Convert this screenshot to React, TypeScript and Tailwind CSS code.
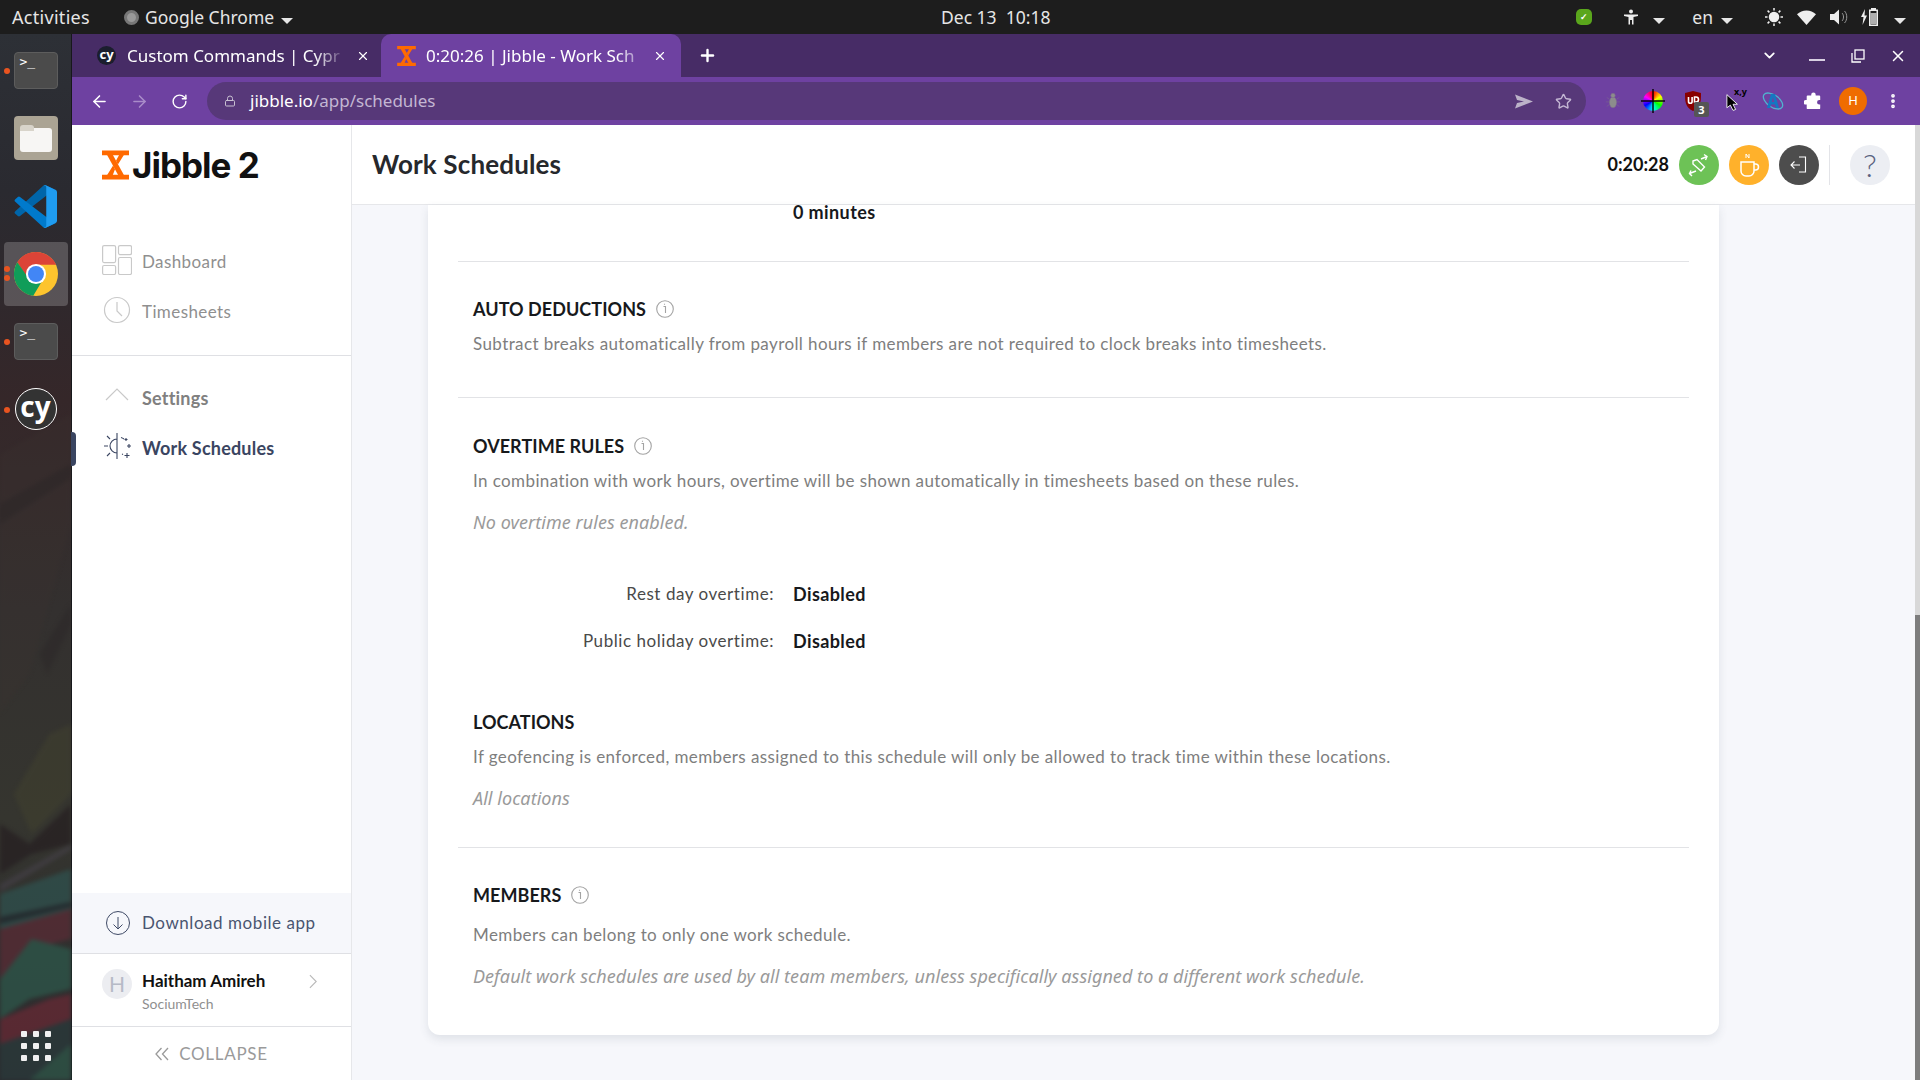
import { ArrowLeft, ArrowRight, RotateCw, Lock, Star, MoreVertical, X, Plus, ChevronDown } from "lucide-react";
import type { ReactNode } from "react";

const body = "font-['Lato',sans-serif]";
const chromeFont = "font-['Noto_Sans',sans-serif]";

function Caret() {
  return <span className="inline-block w-0 h-0 border-l-[6px] border-r-[6px] border-t-[6px] border-l-transparent border-r-transparent border-t-[#e6e6e6]" />;
}

// orange hourglass, used in the tab and the sidebar
function JibbleMark({ className }: { className: string }) {
  return (
    <svg viewBox="0 0 28 30" className={className} fill="#ff6a00">
      <path d="M0 0h28v5H0zM0 25h28v5H0z" />
      <path d="M5 4h6l12 22h-6z" />
      <path d="M18 4h5l-6.500 10.500-2-4zM11.500 15.500l2 4L11 26H5z" />
    </svg>
  );
}

function TermIcon() {
  return (
    <div className="w-11 h-[37px] rounded-[4px] bg-[#4b4b4b] border border-[#5d5d5d] pl-[5px] text-white text-[13px] leading-[17px] font-['DejaVu_Sans_Mono',monospace]">
      &gt;_
    </div>
  );
}

function Dot({ className = "top-1/2 -translate-y-1/2" }: { className?: string }) {
  return <span className={`absolute left-[4px] w-[6px] h-[6px] rounded-full bg-[#e95420] ${className}`} />;
}

// blurred streaks of the desktop wallpaper behind the dock
function Wallpaper() {
  return (
    <svg viewBox="0 0 72 1046" preserveAspectRatio="none" className="absolute inset-0 w-full h-full blur-[2px] opacity-70">
      <path fill="#3c3230" d="M0 420 72 380v110L30 640 0 680z" opacity=".4" />
      <path fill="#2a2526" d="M0 470 72 430v14L0 490zM40 620l32-50v20l-24 50z" opacity=".6" />
      <path fill="#44452f" d="M14 760 50 700l22-10v70l-40 40z" opacity=".6" />
      <path fill="#241c1f" d="M0 790 30 810 72 770v40l-40 10-32 20z" opacity=".9" />
      <path fill="#4a4550" d="M0 850 72 810v6L0 858z" opacity=".7" />
      <path fill="#2f5350" d="M0 860 72 835v45L0 895z" />
      <path fill="#1f2a30" d="M0 883 72 868v5L0 890z" />
      <path fill="#5c2b36" d="M0 895 72 875v30L30 915 0 945z" />
      <path fill="#2d5a4c" d="M0 945 32 905l40 10v40L30 965 0 985z" />
      <path fill="#6b2935" d="M0 985 50 965l22-5v25L30 1005 0 1010z" />
      <path fill="#2a3b3c" d="M0 1010 72 985v61H0z" />
      <path fill="#2f5a4a" d="M30 1046 72 1010v36z" />
    </svg>
  );
}

function Dock() {
  return (
    <aside className="w-[72px] shrink-0 relative bg-[linear-gradient(180deg,#2d3036_0%,#2a2a30_15%,#352729_35%,#33302f_55%,#35352f_75%,#2a2a2e_100%)] border-r border-[#17181b] flex flex-col items-center pt-[18px]">
      <Wallpaper />
      <div className="relative w-full h-[37px] flex justify-center"><Dot /><TermIcon /></div>
      <div className="relative w-11 h-11 mt-[27px] rounded-[4px] bg-[#aba494] flex items-center justify-center">
        <div className="relative w-8 h-[24px] mt-[3px] rounded-[3px] bg-[#f7f6f4]">
          <span className="absolute -top-[3px] left-0 w-[14px] h-[6px] rounded-t-[3px] bg-[#d8d4ca]" />
        </div>
      </div>
      <div className="relative mt-[25px] h-[42px]">
        <svg viewBox="0 0 100 100" className="w-[43px] h-[43px]">
          <path fill="#0065a9" d="M96 11 75 1a6 6 0 0 0-7 1L3 61a4 4 0 0 0 0 6l6 5a4 4 0 0 0 5 0L96 9z" />
          <path fill="#007acc" d="M96 89 75 99a6 6 0 0 1-7-1L3 39a4 4 0 0 1 0-6l6-5a4 4 0 0 1 5 0l82 62z" />
          <path fill="#1f9cf0" d="M75 99a6 6 0 0 1-7-1c2 2 7 1 7-3V5c0-4-5-5-7-3a6 6 0 0 1 7-1l21 10a6 6 0 0 1 4 6v66a6 6 0 0 1-4 6z" />
        </svg>
      </div>
      <div className="relative mt-[15px] w-[64px] h-[64px] rounded-[4px] bg-white/20 flex items-center justify-center">
        <span className="absolute left-0 top-[24px] w-[6px] h-[6px] rounded-full bg-[#e95420]" />
        <span className="absolute left-0 top-[33px] w-[6px] h-[6px] rounded-full bg-[#e95420]" />
        <svg viewBox="0 0 48 48" className="w-11 h-11">
          <circle cx="24" cy="24" r="24" fill="#fdc42e" />
          <path fill="#dc4437" d="M24 0A24 24 0 0 0 3.600 11.300L14 28 24 14h22A24 24 0 0 0 24 0z" />
          <path fill="#109d59" d="M3.600 11.300A24 24 0 0 0 21 47.800L31 31 16 29z" />
          <circle cx="24" cy="24" r="11" fill="#fff" />
          <circle cx="24" cy="24" r="8.700" fill="#4286f5" />
        </svg>
      </div>
      <div className="relative w-full h-[37px] mt-[17px] flex justify-center"><Dot /><TermIcon /></div>
      <div className="relative w-full h-[43px] mt-[28px] flex justify-center">
        <Dot />
        <div className="w-[42px] h-[42px] rounded-full bg-[#333] border border-white flex items-center justify-center text-white text-[28px] font-bold leading-none pb-[6px] font-['Open_Sans',sans-serif]">cy</div>
      </div>
      <div className="absolute bottom-[19px] left-[21px] grid grid-cols-3 gap-x-[6px] gap-y-[6px]">
        {Array.from({ length: 9 }).map((_, i) => (
          <span key={i} className="w-[6px] h-[6px] rounded-[1px] bg-[#f0f0f0]" />
        ))}
      </div>
    </aside>
  );
}

function TopBar() {
  return (
    <header className={`h-[34px] bg-[#1d1d1d] flex items-center text-[#e6e6e6] text-[17.500px] relative ${chromeFont}`}>
      <span className="ml-[12px] text-[18px] tracking-[0.3px]">Activities</span>
      <span className="ml-[34px] w-[15px] h-[15px] rounded-full bg-[#999] border-[3px] border-[#777]" />
      <span className="ml-[6px]">Google Chrome</span>
      <span className="ml-[7px]"><Caret /></span>
      <span className="absolute left-[941px]">Dec 13&nbsp;&nbsp;10:18</span>
      <div className="ml-auto flex items-center">
        <span className="w-[16px] h-[16px] rounded-[5px] bg-[#5aa61c] flex items-center justify-center text-white text-[9px] font-bold">✓</span>
        <svg viewBox="0 0 16 16" className="w-4 h-4 ml-[31px]" fill="#eee">
          <circle cx="8" cy="2.500" r="2" />
          <path d="M1 5.500h14v1.500l-4.500 1v7.500H9V11H7v4.500H5.500V8L1 7z" />
        </svg>
        <span className="ml-[14px]"><Caret /></span>
        <span className="ml-[27px]">en</span>
        <span className="ml-[8px]"><Caret /></span>
        <svg viewBox="0 0 18 18" className="w-[18px] h-[18px] ml-[32px]" fill="none" stroke="#eee" strokeWidth="1.500">
          <circle cx="9" cy="9" r="4.500" />
          <path d="M9 4.500a4.500 4.500 0 0 0 0 9 4.500 4.500 0 0 0 3-8z" fill="#eee" stroke="none" />
          <path d="M9 0v2.500M9 15.500V18M0 9h2.500M15.500 9H18M2.600 2.600l1.800 1.800M13.600 13.600l1.800 1.800M2.600 15.400l1.800-1.800M13.600 4.400l1.800-1.800" />
        </svg>
        <svg viewBox="0 0 18 14" className="w-[19px] h-[15px] ml-[14px]" fill="#eee"><path d="M9 14 0 4a13 13 0 0 1 18 0z" /></svg>
        <svg viewBox="0 0 18 16" className="w-[18px] h-4 ml-[14px]" fill="#eee">
          <path d="M0 5h4l5-4.500v15L4 11H0z" />
          <path d="M12 4c2 2 2 6 0 8M14.500 2c3 3 3 9 0 12" stroke="#999" fill="none" />
        </svg>
        <svg viewBox="0 0 20 18" className="w-5 h-[18px] ml-[13px]" fill="#eee">
          <path d="M4 1 0 9h2.500L1.500 17 6 7.500H3.500z" />
          <path fillRule="evenodd" d="M10 0h5v1.500h2V18H8V1.500h2zM9.500 3v13.500h6V3z" />
          <rect x="9.500" y="5" width="6" height="11" opacity=".7" />
        </svg>
        <span className="ml-[13px] mr-[14px]"><Caret /></span>
      </div>
    </header>
  );
}

function ChromeTabs() {
  return (
    <div className={`h-[43px] bg-[#472c66] flex items-end pl-[5px] text-white text-[17px] ${chromeFont}`}>
      <div className="w-[304px] h-[43px] flex items-center pl-[20px] pr-[11px]">
        <span className="w-[19px] h-[19px] rounded-full bg-[#1b1e2e] text-white text-[13px] leading-[16px] font-bold text-center shrink-0">cy</span>
        <span className="ml-[11px] w-[220px] overflow-hidden whitespace-nowrap [mask-image:linear-gradient(90deg,#000_85%,transparent)]">Custom Commands | Cypr</span>
        <X className="w-[14px] h-[14px] ml-auto shrink-0" />
      </div>
      <div className="w-[300px] h-[43px] bg-[#6e41a1] rounded-t-[10px] flex items-center pl-[16px] pr-[14px]">
        <JibbleMark className="w-[19px] h-[20px] shrink-0" />
        <span className="ml-[10px] w-[224px] overflow-hidden whitespace-nowrap [mask-image:linear-gradient(90deg,#000_85%,transparent)]">0:20:26 | Jibble - Work Sch</span>
        <X className="w-[14px] h-[14px] ml-auto shrink-0" />
      </div>
      <Plus className="w-[19px] h-[19px] ml-[17px] mb-[12px]" strokeWidth={3} />
      <div className="ml-auto flex items-center h-full pr-[13px]">
        <ChevronDown className="w-[17px] h-[17px]" strokeWidth={2.500} />
        <span className="w-4 h-[2px] ml-[31px] mt-[8px] bg-[#d8d0e2]" />
        <svg viewBox="0 0 14 14" className="w-[14px] h-[14px] ml-[26px]" fill="none" stroke="#fff" strokeWidth="1.300">
          <rect x="4" y="1" width="9" height="9" />
          <path d="M1 4v9h9" />
        </svg>
        <X className="w-[18px] h-[18px] ml-[24px]" />
      </div>
    </div>
  );
}

function Slot({ children }: { children: ReactNode }) {
  return <div className="relative w-[40px] h-[40px] flex items-center justify-center">{children}</div>;
}

function Toolbar() {
  return (
    <div className={`h-[48px] bg-[#6e41a1] flex items-center text-[17px] ${chromeFont}`}>
      <ArrowLeft className="w-[19px] h-[19px] ml-[18px] text-white" />
      <ArrowRight className="w-[19px] h-[19px] ml-[21px] text-[#a98cc9]" />
      <RotateCw className="w-[17px] h-[17px] ml-[22px] text-white" />
      <div className="ml-[19px] w-[1379px] h-[38px] rounded-full bg-[#573879] flex items-center pl-[17px] pr-[14px]">
        <Lock className="w-[12px] h-[12px] text-[#c8c0d2]" />
        <span className="ml-[14px] text-white">jibble.io<span className="text-[#c3b6d3]">/app/schedules</span></span>
        <svg viewBox="0 0 18 14" className="ml-auto w-[18px] h-[15px]" fill="#bcb2c9"><path d="M0 0 18 7 0 14l2-5.500L9 7 2 5.500z" /></svg>
        <Star className="w-[17px] h-[17px] ml-[22px] text-[#c3b6d3]" />
      </div>
      <div className="ml-[7px] flex items-center">
        <Slot>
          <svg viewBox="0 0 20 20" className="w-[18px] h-[18px]" fill="#8c8c8c" stroke="#7a6a8c" strokeWidth=".6">
            <path d="M3 6 6 8M17 6l-3 2M2 11h4M18 11h-4M3 16l3-2M17 16l-3-2" fill="none" />
            <ellipse cx="10" cy="11.500" rx="4" ry="6" />
            <circle cx="10" cy="4" r="2.500" />
          </svg>
        </Slot>
        <Slot>
          <div className="relative w-5 h-5 rounded-full bg-[conic-gradient(#f00,#ff0,#0f0,#0ff,#00f,#f0f,#f00)]">
            <span className="absolute left-[9px] -top-[2px] w-[2px] h-6 bg-black/70" />
            <span className="absolute top-[9px] -left-[2px] h-[2px] w-6 bg-black/70" />
          </div>
        </Slot>
        <Slot>
          <svg viewBox="0 0 18 20" className="w-[18px] h-[20px]">
            <path fill="#800" d="M1 2 9 0l8 2c0 8 0 14-8 18C1 16 1 10 1 2z" />
            <path fill="none" stroke="#fff" strokeWidth="1.600" d="M4.500 6v4.500a1.800 1.800 0 0 0 3.600 0V6M10.500 6h1.500a2.500 2.500 0 0 1 0 5h-1.500z" />
          </svg>
          <span className="absolute left-[21px] top-[21px] w-[15px] h-[15px] rounded-[2px] bg-[#555] text-white text-[11px] leading-[15px] text-center font-bold">3</span>
        </Slot>
        <Slot>
          <svg viewBox="0 0 16 20" className="w-[14px] h-[19px] mt-[2px]"><path fill="#000" stroke="#fff" d="M1 1v15l4-3 3 6 3-1-3-6h5z" /></svg>
          <span className="absolute left-[21px] top-[5px] text-[9px] leading-[12px] font-bold text-black">x,y</span>
        </Slot>
        <Slot>
          <svg viewBox="0 0 22 20" className="w-[22px] h-[20px]">
            <ellipse cx="11" cy="10" rx="11" ry="6" transform="rotate(35 11 10)" fill="none" stroke="#4fb4cf" strokeWidth="1.300" />
            <path fill="#1478c2" d="M9 3h4l4 14h-3l-1-3.500H9L8 17H5zM9.700 11h2.600L11 6z" />
          </svg>
        </Slot>
        <Slot>
          <svg viewBox="0 0 20 20" className="w-[18px] h-[18px]" fill="#fff">
            <path d="M8 3a2.500 2.500 0 0 1 5 0v1h4a1 1 0 0 1 1 1v4h-1a2.500 2.500 0 0 0 0 5h1v4a1 1 0 0 1-1 1H4a1 1 0 0 1-1-1v-4H2a2.500 2.500 0 0 1 0-5h1V5a1 1 0 0 1 1-1h4z" />
          </svg>
        </Slot>
        <Slot>
          <span className="w-7 h-7 rounded-full bg-[#ef6c00] text-white text-[13px] flex items-center justify-center">H</span>
        </Slot>
        <Slot>
          <MoreVertical className="w-[18px] h-[18px] text-white" strokeWidth={3} />
        </Slot>
      </div>
    </div>
  );
}

function NavIconDash() {
  return (
    <svg viewBox="0 0 30 30" className="w-[30px] h-[30px] -mt-[4px]" fill="none" stroke="#c9c9c9" strokeWidth="1.200">
      <rect x="0.600" y="0.600" width="13" height="17" rx="1.500" />
      <rect x="16.500" y="0.600" width="13" height="9" rx="1.500" />
      <rect x="0.600" y="20.500" width="13" height="9" rx="1.500" />
      <rect x="16.500" y="12.500" width="13" height="17" rx="1.500" />
    </svg>
  );
}

function Sidebar() {
  return (
    <nav className={`w-[280px] shrink-0 bg-white border-r border-[#e6e7ea] flex flex-col relative ${body}`}>
      <div className="flex items-center pl-[30px] h-[80px]">
        <JibbleMark className="w-[27px] h-[30px]" />
        <span className="ml-[3px] font-['Inter',sans-serif] font-bold text-[35px] leading-none tracking-[-1px] text-[#111]">Jibble 2</span>
      </div>
      <div className="mt-[42px] pb-[28px] border-b border-[#dfe0e4] flex flex-col gap-[20px] pl-[30px] text-[#8f8f8f] text-[17px] tracking-[0.4px]">
        <div className="flex items-center h-[30px] gap-[10px]"><NavIconDash /><span>Dashboard</span></div>
        <div className="flex items-center h-[30px] gap-[10px]">
          <svg viewBox="0 0 30 30" className="w-[30px] h-[30px] -mt-[4px]" fill="none" stroke="#c9c9c9" strokeWidth="1.200">
            <circle cx="15" cy="15" r="12.500" />
            <path d="M15 7v9l5 5" />
          </svg>
          <span>Timesheets</span>
        </div>
      </div>
      <div className="mt-[27px] flex flex-col gap-[20px] pl-[30px] text-[18px] tracking-[0.2px] font-bold">
        <div className="flex items-center h-[30px] gap-[10px] text-[#808080]">
          <svg viewBox="0 0 30 30" className="w-[30px] h-[30px]" fill="none" stroke="#c9c9c9" strokeWidth="1.200"><path d="M4 17 15 6l11 11" /></svg>
          <span>Settings</span>
        </div>
        <div className="flex items-center h-[30px] gap-[10px] text-[#3a4561]">
          <svg viewBox="0 0 30 30" className="w-[30px] h-[30px] -mt-[4px]" fill="none" stroke="#3a4561" strokeWidth="1.100">
            <path d="M15 2v26M15 8a7 7 0 0 0 0 14M6 15H2M8 8 5 5M8 22l-3 3" />
            <path d="M19 6.500a9 9 0 0 1 3 1.500M20 23.500a9 9 0 0 0 1-.5M25 15h4M27 13v4M25 22v5M22.500 24.500h5M24 7v3M22.500 8.500h3" />
          </svg>
          <span>Work Schedules</span>
        </div>
      </div>
      <span className="absolute -left-[1px] top-[307px] w-[5px] h-[34px] rounded-r-[4px] bg-[#3a4561]" />
      <div className="mt-auto h-[61px] bg-[#f6f7fb] border-b border-[#dfe0e4] flex items-center pl-[34px] gap-[12px] text-[#4a5570] text-[17px] tracking-[0.55px]">
        <svg viewBox="0 0 24 24" className="w-6 h-6" fill="none" stroke="#3f4a66" strokeWidth="1">
          <circle cx="12" cy="12" r="11.500" />
          <path d="M12 6v12M7.500 13.500 12 18l4.500-4.500" />
        </svg>
        <span>Download mobile app</span>
      </div>
      <div className="h-[73px] border-b border-[#dfe0e4] flex items-start pl-[30px] pt-[15px] relative">
        <span className="w-[30px] h-[30px] rounded-full bg-[#ecedf1] text-[#b6bac6] text-[21px] flex items-center justify-center">H</span>
        <div className="ml-[10px]">
          <div className="text-[17px] leading-[24px] font-bold text-[#111]">Haitham Amireh</div>
          <div className="text-[14px] leading-[20px] mt-[1px] text-[#8f8f8f]">SociumTech</div>
        </div>
        <svg viewBox="0 0 10 16" className="absolute left-[237px] top-[20px] w-[9px] h-[15px]" fill="none" stroke="#b8b8b8" strokeWidth="1.200"><path d="m1 1 7 7-7 7" /></svg>
      </div>
      <div className="h-[53px] flex items-center justify-center gap-[10px] text-[#9a9a9a] text-[17px] tracking-[0.7px]">
        <svg viewBox="0 0 14 14" className="w-[14px] h-[14px]" fill="none" stroke="#9a9a9a" strokeWidth="1.300"><path d="M6.500 1 1 7l5.500 6M13 1 7.500 7l5.500 6" /></svg>
        <span>COLLAPSE</span>
      </div>
    </nav>
  );
}

function Info() {
  return (
    <svg viewBox="0 0 18 18" className="w-[18px] h-[18px] ml-[10px]" fill="none" stroke="#a3a3a3" strokeWidth="1.100">
      <circle cx="9" cy="9" r="8.300" />
      <path d="M7.500 6.500H9.500V13M8.500 3.800v1" />
    </svg>
  );
}

function Head({ title, info = true, className = "" }: { title: string; info?: boolean; className?: string }) {
  return (
    <div className={`flex items-center h-[24px] pl-[15px] ${className}`}>
      <h3 className="text-[18px] tracking-[0.05px] font-bold text-[#17191c]">{title}</h3>
      {info && <Info />}
    </div>
  );
}

function Desc({ children, className = "" }: { children: string; className?: string }) {
  return <p className={`pl-[15px] text-[17px] leading-[24px] tracking-[0.4px] text-[#7e7e7e] ${className}`}>{children}</p>;
}

function Note({ children, className = "" }: { children: string; className?: string }) {
  return <p className={`pl-[15px] font-['Noto_Sans',sans-serif] text-[18px] tracking-[0.05px] leading-[24px] italic text-[#9a9a9a] ${className}`}>{children}</p>;
}

function Row({ label, value }: { label: string; value: string }) {
  return (
    <div className="flex items-center h-[24px]">
      <span className="w-[316px] text-right text-[#4a4a4a] text-[17px] tracking-[0.55px]">{label}</span>
      <span className="ml-[19px] font-bold text-[18px] tracking-[0.4px] text-[#17191c]">{value}</span>
    </div>
  );
}

function Content() {
  return (
    <div className={`flex-1 min-w-0 flex flex-col ${body}`}>
      <div className="h-[80px] shrink-0 bg-white border-b border-[#e6e7ea] flex items-center pl-[20px] pr-[30px]">
        <h1 className="text-[26px] tracking-[0.15px] font-bold text-[#26282c]">Work Schedules</h1>
        <span className="ml-auto text-[18px] font-bold text-[#111]">0:20:28</span>
        <span className="ml-[10px] w-10 h-10 rounded-full bg-[#6dc256] flex items-center justify-center">
          <svg viewBox="0 0 28 28" className="w-7 h-7" fill="none" stroke="#fff" strokeWidth="1.400">
            <path d="m8 10 4-1.500 7.500 7.500-3.500 4-8-7zM10.500 11v.1" />
            <path d="M16 8l6-2.500M19 3.500l3 2-1.500 3.500M4.500 22.500 11 20M7 25l-2.500-2.500L6 19.500" />
          </svg>
        </span>
        <span className="ml-[10px] w-10 h-10 rounded-full bg-[#ffb12b] flex items-center justify-center">
          <svg viewBox="0 0 28 28" className="w-7 h-7" fill="none" stroke="#fff" strokeWidth="1.500">
            <path d="M6 11h13v9a5 5 0 0 1-5 5h-3a5 5 0 0 1-5-5zM19 13h1.500a3 3 0 0 1 0 6H19" />
            <path d="M11 7V3l3 4V3" strokeWidth="1" />
          </svg>
        </span>
        <span className="ml-[10px] w-10 h-10 rounded-full bg-[#4d4d4d] flex items-center justify-center">
          <svg viewBox="0 0 20 20" className="w-5 h-5" fill="none" stroke="#fff" strokeWidth="1.100">
            <path d="M10 2h6.500v15H10M2 10h9M5.500 6.500 2 10l3.500 3.500" />
          </svg>
        </span>
        <span className="ml-[10px] w-px h-10 bg-[#e3e4e8]" />
        <span className="ml-[20px] w-10 h-10 rounded-full bg-[#eceef3] flex items-center justify-center text-[#5a6280] text-[32px] font-light">?</span>
      </div>
      <div className="flex-1 min-h-0 bg-[#f6f7fb] relative flex">
        <div className="flex-1 pl-[76px] pr-[201px]">
          <div className="bg-white rounded-b-[12px] shadow-[0_4px_10px_rgba(60,70,90,0.12)] h-[830px] px-[30px]">
            <div className="h-[57px] border-b border-[#e2e3e6] pl-[335px] font-bold text-[18px] tracking-[0.4px] leading-[14px] text-[#17191c]">0 minutes</div>
            <Head title="AUTO DEDUCTIONS" className="mt-[35px]" />
            <Desc className="mt-[11px]">Subtract breaks automatically from payroll hours if members are not required to clock breaks into timesheets.</Desc>
            <div className="mt-[41px] border-b border-[#e2e3e6]" />
            <Head title="OVERTIME RULES" className="mt-[36px]" />
            <Desc className="mt-[11px]">In combination with work hours, overtime will be shown automatically in timesheets based on these rules.</Desc>
            <Note className="mt-[17px]">No overtime rules enabled.</Note>
            <div className="mt-[48px] flex flex-col gap-[23px]">
              <Row label="Rest day overtime:" value="Disabled" />
              <Row label="Public holiday overtime:" value="Disabled" />
            </div>
            <Head title="LOCATIONS" info={false} className="mt-[57px]" />
            <Desc className="mt-[11px]">If geofencing is enforced, members assigned to this schedule will only be allowed to track time within these locations.</Desc>
            <Note className="mt-[17px]">All locations</Note>
            <div className="mt-[37px] border-b border-[#e2e3e6]" />
            <Head title="MEMBERS" className="mt-[35px]" />
            <Desc className="mt-[16px]">Members can belong to only one work schedule.</Desc>
            <Note className="mt-[17px]">Default work schedules are used by all team members, unless specifically assigned to a different work schedule.</Note>
          </div>
        </div>
      </div>
    </div>
  );
}

export default function App() {
  return (
    <div className="w-[1920px] h-[1080px] overflow-hidden flex flex-col bg-white">
      <TopBar />
      <div className="flex-1 min-h-0 flex">
        <Dock />
        <div className="flex-1 min-w-0 flex flex-col relative">
          <ChromeTabs />
          <Toolbar />
          <div className="flex-1 min-h-0 flex">
            <Sidebar />
            <Content />
          </div>
          <div className="absolute right-0 top-[91px] bottom-0 w-[5px] bg-[#d8d8d8]">
            <div className="absolute left-0 right-0 top-[490px] bottom-0 bg-[#7d7d7d]" />
          </div>
        </div>
      </div>
    </div>
  );
}
